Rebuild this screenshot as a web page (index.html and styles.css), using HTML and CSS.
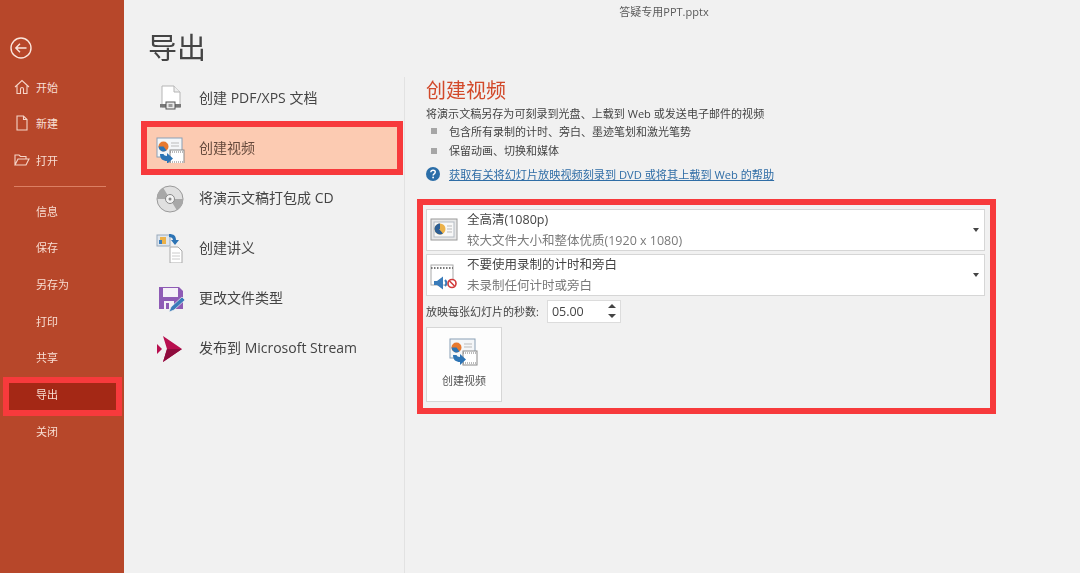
FILE: index.html
```html
<!DOCTYPE html>
<html lang="zh-CN">
<head>
<meta charset="utf-8">
<title>导出</title>
<link rel="stylesheet" href="styles.css">
</head>
<body>
<div class="app">
  <nav class="side">
    <div class="back">
      <svg width="22" height="22" viewBox="0 0 22 22" fill="none" stroke="#fbe6dd" stroke-width="1.4"><circle cx="11" cy="11" r="10"/><path d="M16.5 11H6M10 6.8 5.8 11l4.2 4.2"/></svg>
    </div>
    <div class="side-top">
      <a class="side-item"><svg class="side-ico" width="16" height="16" viewBox="0 0 16 16" fill="none" stroke="#f6d5c8" stroke-width="1.1"><path d="M1 8 8 1.5 15 8M3 6.5V14.5H6.5V10a1.5 1.5 0 0 1 3 0v4.500H13V6.500"/></svg><span>开始</span></a>
      <a class="side-item"><svg class="side-ico" width="16" height="16" viewBox="0 0 16 16" fill="none" stroke="#f6d5c8" stroke-width="1.1"><path d="M3 1h6.500L13 4.500V15H3zM9.500 1v3.500H13"/></svg><span>新建</span></a>
      <a class="side-item"><svg class="side-ico" width="16" height="16" viewBox="0 0 16 16" fill="none" stroke="#f6d5c8" stroke-width="1.1"><path d="M1 13V3h4l1.500 1.500H12V7M1 13l3-6h11l-3 6z"/></svg><span>打开</span></a>
    </div>
    <div class="side-rule"></div>
    <div class="side-bottom">
      <a class="side-item sub">信息</a>
      <a class="side-item sub">保存</a>
      <a class="side-item sub">另存为</a>
      <a class="side-item sub">打印</a>
      <a class="side-item sub">共享</a>
      <a class="side-item sub active"><span>导出</span></a>
      <a class="side-item sub">关闭</a>
    </div>
  </nav>
  <main class="main">
    <div class="filename">答疑专用PPT.pptx</div>
    <h1 class="page-title">导出</h1>
    <div class="columns">
      <ul class="options">
        <li class="option">
          <svg class="opt-ico" width="32" height="32" viewBox="0 0 32 32"><path d="M7 5h12l6 6v15H7z" fill="#fff" stroke="#b5b5b5"/><path d="M19 5v6h6" fill="#eee" stroke="#b5b5b5"/><rect x="5" y="23" width="21" height="3.500" fill="#777"/><rect x="11" y="21" width="9" height="7" fill="#e8e8e8" stroke="#555"/><rect x="13.500" y="23" width="4" height="3" fill="#999"/></svg>
          <span>创建 PDF/XPS 文档</span>
        </li>
        <li class="option selected">
          <svg class="opt-ico" width="32" height="32" viewBox="0 -5 32 32"><rect x="2" y="2" width="25" height="19" fill="#f4f6f8" stroke="#8aa0b5"/><circle cx="8.500" cy="10.500" r="5" fill="#e8792f"/><path d="M3.500 10.500h5l3 4a5 5 0 0 1-8-4z" fill="#2d74b5"/><path d="M16 7h8M16 10h8" stroke="#bbb"/><rect x="15" y="14" width="14" height="14" fill="#fff" stroke="#888"/><path d="M15 16h14M15 26h14" stroke="#777" stroke-dasharray="1 1"/><path d="M5 18c0 5 3 7 7 7v3l6-5.500-6-5.500v3c-2 0-3-1-3.500-2z" fill="#2d74b5"/></svg>
          <span>创建视频</span>
        </li>
        <li class="option">
          <svg class="opt-ico" width="32" height="32" viewBox="1 -2 32 32"><circle cx="16" cy="16" r="13" fill="#e0e0e0" stroke="#999"/><path d="M16 16 9 4.500A13 13 0 0 0 3 16zM16 16l7 11.500A13 13 0 0 0 29 16z" fill="#a8a8a8"/><circle cx="16" cy="16" r="4.500" fill="#f4f4f4" stroke="#888"/><circle cx="16" cy="16" r="1.500" fill="#888"/></svg>
          <span>将演示文稿打包成 CD</span>
        </li>
        <li class="option">
          <svg class="opt-ico" width="32" height="32" viewBox="0 -1 32 32"><rect x="2" y="3" width="13" height="11" fill="#dfe6ee" stroke="#9ab"/><path d="M5 5h6v7H5z" fill="#ecb24a"/><path d="M4 8h3v4H4z" fill="#3a7cba"/><path d="M14 2c5 0 7 2 7 6h3l-4 5-4-5h2c0-2-2-3-4-3z" fill="#2d74b5"/><path d="M15 15h8l4 4v12H15z" fill="#fff" stroke="#aaa"/><path d="M17 21h8M17 24h8M17 27h8" stroke="#ccc"/></svg>
          <span>创建讲义</span>
        </li>
        <li class="option">
          <svg class="opt-ico" width="32" height="32" viewBox="0 -2 32 32"><path d="M4 4h20l4 4v18H4z" fill="#8e5bb5"/><rect x="8" y="5" width="15" height="9" fill="#f4f0f7"/><rect x="9" y="18" width="10" height="8" fill="#f4f0f7"/><rect x="11" y="20" width="3" height="6" fill="#8e5bb5"/><path d="M14 29l2-5L27 14l3 3-11 10z" fill="#3a7cba" stroke="#f0f0f0" stroke-width=".7"/></svg>
          <span>更改文件类型</span>
        </li>
        <li class="option">
          <svg class="opt-ico" width="32" height="32" viewBox="0 0 32 32"><path d="M8 5 27 18 8 31l4-13z" fill="#b80f4f"/><path d="M2 13l5 5-5 5z" fill="#b80f4f"/><path d="M12 18h15L8 31z" fill="#8e0c3d"/></svg>
          <span>发布到 Microsoft Stream</span>
        </li>
      </ul>
      <section class="detail">
        <h2 class="detail-title">创建视频</h2>
        <p class="detail-desc">将演示文稿另存为可刻录到光盘、上载到 Web 或发送电子邮件的视频</p>
        <ul class="bullets">
          <li>包含所有录制的计时、旁白、墨迹笔划和激光笔势</li>
          <li>保留动画、切换和媒体</li>
        </ul>
        <a class="help">
          <svg width="14" height="14" viewBox="0 0 14 14"><circle cx="7" cy="7" r="7" fill="#2b6ea8"/><path d="M4.800 5.300C4.900 3.900 5.900 3.200 7.100 3.200c1.300 0 2.200.8 2.200 1.900 0 1.800-2.200 1.600-2.200 3.300" fill="none" stroke="#fff" stroke-width="1.400"/><circle cx="7.100" cy="10.500" r=".9" fill="#fff"/></svg>
          <span class="help-text">获取有关将幻灯片放映视频刻录到 DVD 或将其上载到 Web 的帮助</span>
        </a>
        <div class="settings">
          <div class="select">
            <svg class="sel-ico" width="28" height="28" viewBox="0 0 28 28"><rect x="1" y="3" width="26" height="21" fill="#e9e9e9" stroke="#9a9a9a"/><rect x="4" y="6" width="20" height="15" fill="#f8f8f8" stroke="#b5bcc4"/><circle cx="10" cy="13" r="5.500" fill="#ecb24a"/><path d="M10 7.500V13h-1l4 4.500a5.500 5.500 0 0 1-8.500-4.500c0-3 2.500-5.500 5.500-5.500z" fill="#2d5f95"/><path d="M17 10h5M17 13h5M17 16h5" stroke="#bbb"/></svg>
            <div class="sel-text"><div class="sel-main">全高清(1080p)</div><div class="sel-sub">较大文件大小和整体优质(1920 x 1080)</div></div>
            <i class="caret"></i>
          </div>
          <div class="select">
            <svg class="sel-ico" width="28" height="32" viewBox="0 -4 28 32"><rect x="1" y="2" width="22" height="20" fill="#fff" stroke="#aaa"/><path d="M1 5h22" stroke="#777" stroke-dasharray="1.500 1.500" stroke-width="2"/><path d="M4 18h3l6-4.500v13L7 22H4z" fill="#3a7cba"/><path d="M15 17a4.500 4.500 0 0 1 0 6" fill="none" stroke="#3a7cba" stroke-width="2"/><circle cx="22" cy="20.500" r="4" fill="#fff" stroke="#d23b3b" stroke-width="1.600"/><path d="M19.500 18l5 5" stroke="#d23b3b" stroke-width="1.600"/></svg>
            <div class="sel-text"><div class="sel-main">不要使用录制的计时和旁白</div><div class="sel-sub">未录制任何计时或旁白</div></div>
            <i class="caret"></i>
          </div>
          <div class="seconds">
            <label>放映每张幻灯片的秒数:</label>
            <div class="spin"><span>05.00</span><div class="arrows"><i class="up"></i><i class="down"></i></div></div>
          </div>
          <button class="create">
            <svg width="32" height="32" viewBox="0 0 32 32"><rect x="2" y="2" width="25" height="19" fill="#f4f6f8" stroke="#8aa0b5"/><circle cx="8.500" cy="10.500" r="5" fill="#e8792f"/><path d="M3.500 10.500h5l3 4a5 5 0 0 1-8-4z" fill="#2d74b5"/><path d="M16 7h8M16 10h8" stroke="#bbb"/><rect x="15" y="14" width="14" height="14" fill="#fff" stroke="#888"/><path d="M15 16h14M15 26h14" stroke="#777" stroke-dasharray="1 1"/><path d="M5 18c0 5 3 7 7 7v3l6-5.500-6-5.500v3c-2 0-3-1-3.500-2z" fill="#2d74b5"/></svg>
            <span>创建视频</span>
          </button>
        </div>
      </section>
    </div>
  </main>
</div>
</body>
</html>
```
FILE: styles.css
```css
* { box-sizing: border-box; }
html, body { margin: 0; padding: 0; }
body {
  width: 1080px;
  height: 573px;
  overflow: hidden;
  background: #f1f1f1;
  font-family: "Open Sans", "Noto Sans CJK SC", sans-serif;
  color: #444;
}
ul { list-style: none; margin: 0; padding: 0; }
h1, h2, p { margin: 0; font-weight: 400; }

.app { display: flex; height: 573px; filter: blur(.35px); }

.side {
  width: 124px;
  flex: none;
  background: #b7472a;
  color: #f8ded3;
  font-size: 11px;
}
.back { height: 37px; margin-top: 37px; padding-left: 10px; }
.back svg { display: block; }
.side-top { margin-top: -5.500px; }
.side-item {
  display: flex;
  align-items: center;
  height: 36.5px;
  padding-left: 14px;
  gap: 6px;
}
.side-ico { flex: none; }
.side-rule { height: 1px; background: #dc7f63; margin: 8px 18px 5.500px 14px; }
.side-item.sub { padding-left: 36px; height: 36.67px; }
.side-item.active {
  padding-left: 3px;
  height: 40px;
  margin: 1px 2px -4px 0;
}
.side-item.active span {
  display: flex;
  align-items: center;
  width: 119px;
  height: 39px;
  padding: 0 0 6px 27px;
  background: #a42815;
  border: 6px solid #f73a3c;
}

.main { flex: 1; min-width: 0; }
.filename {
  text-align: center;
  font-size: 11px;
  color: #5a5a5a;
  line-height: 14px;
  padding: 5px 0 0 124px;
}
.page-title {
  font-size: 29px;
  line-height: 40px;
  color: #444;
  margin: 9px 0 0 24px;
}
.columns { display: flex; margin-top: 9px; }

.options { width: 281px; flex: none; padding: 0 0 0 17px; height: 496px; border-right: 1px solid #e2e2e2; }
.option {
  display: flex;
  align-items: center;
  height: 50px;
  width: 262px;
  padding-left: 16px;
  gap: 12px;
  font-size: 14px;
  color: #444;
}
.opt-ico { flex: none; margin-left: -2px; }
.option:first-child { margin-top: -5px; }
.option.selected {
  height: 54px;
  margin: -1px 0 -3px;
  background: #fccbb2;
  border: 6px solid #f73a3c;
  padding: 0 0 2px 10px;
  color: #674b3d;
}

.detail { flex: 1; min-width: 0; padding: 0 0 0 21px; }
.detail-title {
  font-size: 20px;
  line-height: 28px;
  color: #d2492a;
}
.detail-desc { font-size: 11.050px; line-height: 18px; color: #444; }
.bullets { font-size: 11px; margin-top: -2px; }
.bullets li {
  display: flex;
  align-items: center;
  height: 19.500px;
  padding-left: 23px;
  position: relative;
}
.bullets li::before {
  content: "";
  position: absolute;
  left: 5px;
  top: 7px;
  width: 6px;
  height: 6px;
  background: #a6a6a6;
}
.help { display: flex; align-items: center; gap: 9px; margin-top: 4px; height: 19px; }
.help svg { flex: none; }
.help-text { font-size: 11.150px; color: #2f6da6; text-decoration: underline; }

.settings {
  width: 579px;
  height: 215px;
  margin: 16px 0 0 -9px;
  border: 6px solid #f73a3c;
  padding: 4px 5px 0 3px;
}
.select {
  display: flex;
  align-items: center;
  height: 42px;
  background: #fff;
  border: 1px solid #d6d6d6;
  margin-bottom: 2px;
  padding-left: 3px;
}
.select + .select { margin-top: 3px; }
.sel-ico { flex: none; margin-right: 9px; }
.sel-text { flex: 1; min-width: 0; align-self: flex-start; }
.sel-main { font-size: 12.500px; line-height: 19px; color: #444; }
.sel-sub { font-size: 12.500px; line-height: 23px; color: #7a7a7a; }
.caret {
  width: 0;
  height: 0;
  border: 3.500px solid transparent;
  border-top: 4px solid #444;
  border-bottom: 0;
  margin-right: 5px;
}
.seconds { display: flex; align-items: center; height: 26px; font-size: 11px; gap: 8px; }
.spin {
  display: flex;
  align-items: center;
  justify-content: space-between;
  width: 74px;
  height: 23px;
  background: #fff;
  border: 1px solid #dcdcdc;
  padding: 0 4px;
  font-size: 12.500px;
}
.arrows { display: flex; flex-direction: column; gap: 6px; }
.arrows i { display: block; width: 0; height: 0; border: 4px solid transparent; }
.arrows .up { border-top: 0; border-bottom: 4px solid #444; }
.arrows .down { border-bottom: 0; border-top: 4px solid #444; }
.create {
  display: flex;
  flex-direction: column;
  align-items: center;
  width: 76px;
  height: 75px;
  margin-top: 3px;
  padding: 9px 0 0;
  background: #fdfdfd;
  border: 1px solid #d6d6d6;
  font-family: inherit;
  font-size: 11px;
  color: #555;
  gap: 3px;
}
.create svg { display: block; }
```
